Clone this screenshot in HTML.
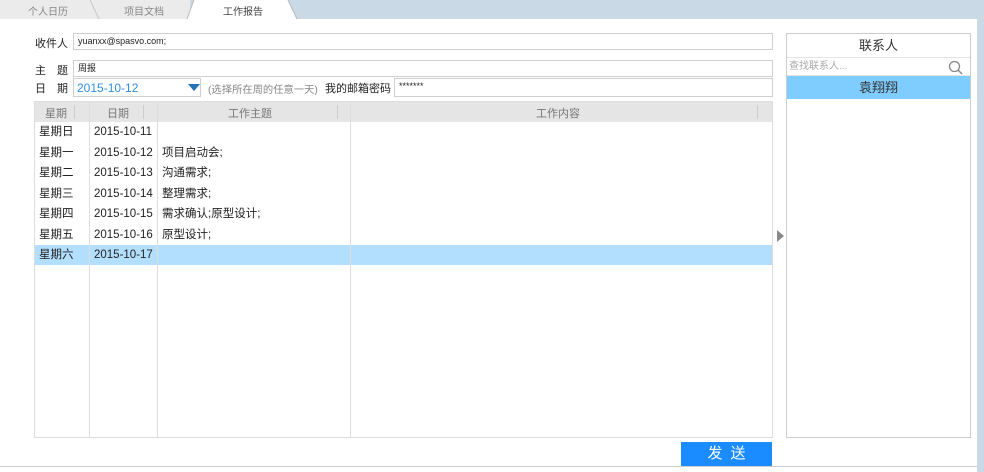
<!DOCTYPE html>
<html><head><meta charset="utf-8"><style>
*{margin:0;padding:0;box-sizing:border-box}
body{width:984px;height:472px;overflow:hidden;background:#fff;font-family:"Liberation Sans","Noto Sans CJK SC",sans-serif;font-size:11px;color:#222;position:relative}
.abs{position:absolute}
.inp{position:absolute;border:1px solid #cfcfcf;background:#fff;font-size:9px;padding-left:4px;line-height:15px}
.lbl{position:absolute;font-size:11px;color:#222}
.row{position:absolute;left:35px;width:737px;height:20.5px;line-height:20.5px;font-size:11.5px}
.row span{position:absolute}
</style></head><body>
<div class="abs" style="left:0;top:0;width:984px;height:19px;background:#c9d9e6"></div>
<div class="abs" style="left:0;top:0;width:190px;height:19px;background:#ebebeb"></div>
<svg class="abs" style="left:0;top:0" width="300" height="20">
<polygon points="90,0 100,19 0,19 0,0" fill="#ebebeb"/>
<polygon points="90,0 190,0 182,19 100,19" fill="#ebebeb"/>
<line x1="90" y1="0" x2="99" y2="19" stroke="#c9c9c9"/>
<polygon points="194,0 288,0 297,19 187,19" fill="#fff"/>
<line x1="194" y1="0" x2="187" y2="19" stroke="#bbb"/>
<line x1="288" y1="0" x2="297" y2="19" stroke="#bbb"/>
</svg>
<div class="abs" style="left:28px;top:3px;font-size:10px;color:#888">个人日历</div>
<div class="abs" style="left:124px;top:3px;font-size:10px;color:#888">项目文档</div>
<div class="abs" style="left:223px;top:3px;font-size:10px;color:#444">工作报告</div>
<div class="abs" style="left:977px;top:19px;width:7px;height:453px;background:#c9d9e6"></div>
<div class="abs" style="left:0;top:466px;width:977px;height:1px;background:#ccc"></div>

<div class="lbl" style="left:35px;top:35px">收件人</div>
<div class="inp" style="left:73px;top:33px;width:700px;height:17px">yuanxx@spasvo.com;</div>
<div class="lbl" style="left:35px;top:62px">主　题</div>
<div class="inp" style="left:73px;top:60px;width:700px;height:17px">周报</div>
<div class="lbl" style="left:35px;top:80px">日　期</div>
<div class="inp" style="left:73px;top:78px;width:128px;height:19px;font-size:12px;color:#2f8fe0;line-height:18px;padding-left:3px">2015-10-12</div>
<svg class="abs" style="left:188px;top:84px" width="12" height="8"><polygon points="0,0 12,0 6,7" fill="#2273b5"/></svg>
<div class="abs" style="left:208px;top:81px;font-size:10.3px;color:#888;white-space:nowrap">(选择所在周的任意一天)</div>
<div class="abs" style="left:325px;top:80px;font-size:11px;color:#222">我的邮箱密码</div>
<div class="inp" style="left:394px;top:78px;width:379px;height:19px">*******</div>

<div class="abs" style="left:34px;top:101px;width:739px;height:337px;border:1px solid #ddd"></div>
<div class="abs" style="left:35px;top:102px;width:737px;height:20px;background:#e5e5e5"></div>
<div class="abs" style="left:74px;top:105px;width:1px;height:14px;background:#ccc"></div>
<div class="abs" style="left:143px;top:105px;width:1px;height:14px;background:#ccc"></div>
<div class="abs" style="left:337px;top:105px;width:1px;height:14px;background:#ccc"></div>
<div class="abs" style="left:757px;top:105px;width:1px;height:14px;background:#ccc"></div>
<div class="abs" style="left:45px;top:105px;color:#777">星期</div>
<div class="abs" style="left:107px;top:105px;color:#777">日期</div>
<div class="abs" style="left:228px;top:105px;color:#777">工作主题</div>
<div class="abs" style="left:536px;top:105px;color:#777">工作内容</div>
<div class="abs" style="left:35px;top:245px;width:737px;height:20px;background:#b3dfff"></div>
<div class="abs" style="left:89px;top:102px;width:1px;height:335px;background:#ddd"></div>
<div class="abs" style="left:157px;top:102px;width:1px;height:335px;background:#ddd"></div>
<div class="abs" style="left:350px;top:102px;width:1px;height:335px;background:#ddd"></div>
<div class="row" style="top:122px"><span style="left:4px">星期日</span><span style="left:59px">2015-10-11</span></div>
<div class="row" style="top:142.5px"><span style="left:4px">星期一</span><span style="left:59px">2015-10-12</span><span style="left:127px">项目启动会;</span></div>
<div class="row" style="top:163px"><span style="left:4px">星期二</span><span style="left:59px">2015-10-13</span><span style="left:127px">沟通需求;</span></div>
<div class="row" style="top:183.5px"><span style="left:4px">星期三</span><span style="left:59px">2015-10-14</span><span style="left:127px">整理需求;</span></div>
<div class="row" style="top:204px"><span style="left:4px">星期四</span><span style="left:59px">2015-10-15</span><span style="left:127px">需求确认;原型设计;</span></div>
<div class="row" style="top:224.5px"><span style="left:4px">星期五</span><span style="left:59px">2015-10-16</span><span style="left:127px">原型设计;</span></div>
<div class="row" style="top:245px"><span style="left:4px">星期六</span><span style="left:59px">2015-10-17</span></div>

<svg class="abs" style="left:777px;top:230px" width="8" height="12"><polygon points="0,0 7,6 0,12" fill="#888"/></svg>

<div class="abs" style="left:786px;top:33px;width:185px;height:405px;border:1px solid #ccc"></div>
<div class="abs" style="left:787px;top:35px;width:183px;text-align:center;font-size:13px;color:#333">联系人</div>
<div class="abs" style="left:787px;top:57px;width:183px;height:19px;border-top:1px solid #e4e4e4;border-bottom:1px solid #e4e4e4;font-size:10px;color:#aaa;line-height:17px;padding-left:2px">查找联系人...</div>
<svg class="abs" style="left:948px;top:60px" width="16" height="15"><circle cx="6.5" cy="6.5" r="5" fill="none" stroke="#888" stroke-width="1.3"/><line x1="10" y1="10" x2="14" y2="14" stroke="#888" stroke-width="1.5"/></svg>
<div class="abs" style="left:787px;top:76px;width:183px;height:23px;background:#7fccff;text-align:center;line-height:23px;font-size:13px;color:#333">袁翔翔</div>

<div class="abs" style="left:681px;top:442px;width:91px;height:24px;background:#1a8cff;color:#fff;text-align:center;line-height:24px;font-size:15px;letter-spacing:8px;padding-left:8px">发送</div>
</body></html>
